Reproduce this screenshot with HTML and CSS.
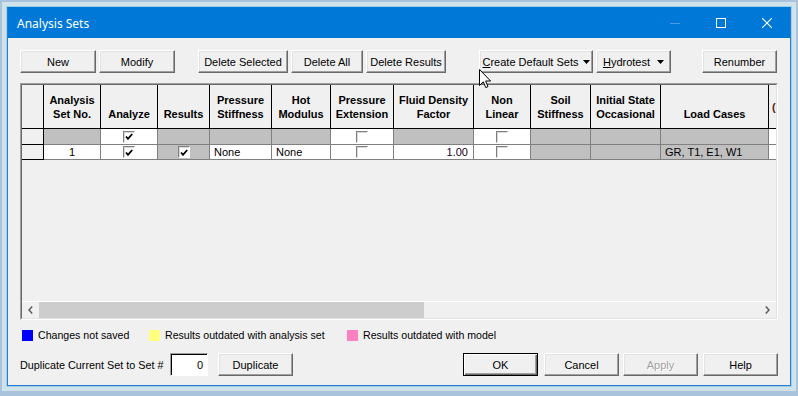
FILE: index.html
```html
<!DOCTYPE html>
<html lang="en">
<head>
  <meta charset="UTF-8" />
  <title>Analysis Sets</title>
  <link rel="stylesheet" href="styles.css">
</head>
<body>
<div class="win">
  <div class="titlebar">
    <span class="title">Analysis Sets</span>
    <span class="ctl"><svg width="10" height="10"><line x1="0" y1="5.5" x2="10" y2="5.5" stroke="#4d9ae0"/></svg></span>
    <span class="ctl"><svg width="10" height="10"><rect x="0.5" y="0.5" width="9" height="9" fill="none" stroke="#fff"/></svg></span>
    <span class="ctl"><svg width="10" height="10"><path d="M0 0L10 10M10 0L0 10" stroke="#fff" stroke-width="1.1"/></svg></span>
  </div>

  <div class="content">
    <div class="toolbar">
      <button class="btn w76">New</button>
      <button class="btn w76 ml3">Modify</button>
      <button class="btn w90 ml23">Delete Selected</button>
      <button class="btn w72 ml3">Delete All</button>
      <button class="btn w80 ml3">Delete Results</button>
      <button class="btn w114 ml33 drop"><span><u>C</u>reate Default Sets</span><svg class="tri" width="7" height="4"><path d="M0 0H7L3.5 4Z"/></svg></button>
      <button class="btn w75 ml3 drop gap7"><span><u>H</u>ydrotest</span><svg class="tri" width="7" height="4"><path d="M0 0H7L3.5 4Z"/></svg></button>
      <button class="btn w75 ml31">Renumber</button>
    </div>

    <div class="gridframe">
      <div class="gridinner">
        <div class="rows">
          <!-- header -->
          <div class="c rh hd"></div>
          <div class="c hd">Analysis<br>Set No.</div>
          <div class="c hd">Analyze</div>
          <div class="c hd">Results</div>
          <div class="c hd">Pressure<br>Stiffness</div>
          <div class="c hd">Hot<br>Modulus</div>
          <div class="c hd">Pressure<br>Extension</div>
          <div class="c hd">Fluid Density<br>Factor</div>
          <div class="c hd">Non<br>Linear</div>
          <div class="c hd">Soil<br>Stiffness</div>
          <div class="c hd">Initial State<br>Occasional</div>
          <div class="c hd">Load Cases</div>
          <div class="c hd last">(</div>

          <!-- filter row -->
          <div class="c rh"></div>
          <div class="c g"></div>
          <div class="c ctr"><span class="chk"><svg width="8" height="7"><path d="M1 3.5L3 5.8L7.2 1" fill="none" stroke="#000" stroke-width="1.8"/></svg></span></div>
          <div class="c g"></div>
          <div class="c g"></div>
          <div class="c g"></div>
          <div class="c ctr"><span class="chk"></span></div>
          <div class="c g"></div>
          <div class="c ctr"><span class="chk"></span></div>
          <div class="c g"></div>
          <div class="c g"></div>
          <div class="c g"></div>
          <div class="c"></div>

          <!-- set 1 -->
          <div class="c rh"></div>
          <div class="c ctr">1</div>
          <div class="c ctr"><span class="chk"><svg width="8" height="7"><path d="M1 3.5L3 5.8L7.2 1" fill="none" stroke="#000" stroke-width="1.8"/></svg></span></div>
          <div class="c g ctr"><span class="chk"><svg width="8" height="7"><path d="M1 3.5L3 5.8L7.2 1" fill="none" stroke="#000" stroke-width="1.8"/></svg></span></div>
          <div class="c lt">None</div>
          <div class="c lt">None</div>
          <div class="c ctr"><span class="chk"></span></div>
          <div class="c rt num">1.00</div>
          <div class="c ctr"><span class="chk"></span></div>
          <div class="c g"></div>
          <div class="c g"></div>
          <div class="c g lt">GR, T1, E1, W1</div>
          <div class="c"></div>
        </div>

        <div class="spacer"></div>

        <div class="hscroll">
          <span class="arrow"><svg width="5" height="8"><path d="M4.2 0.5L1 4L4.2 7.5" fill="none" stroke="#606060" stroke-width="1.6"/></svg></span>
          <div class="track"><div class="thumb"></div></div>
          <span class="arrow"><svg width="5" height="8"><path d="M0.8 0.5L4 4L0.8 7.5" fill="none" stroke="#606060" stroke-width="1.6"/></svg></span>
        </div>
      </div>
    </div>

    <div class="legend">
      <div class="leg leg1"><span class="sw blue"></span>Changes not saved</div>
      <div class="leg leg2"><span class="sw yellow"></span>Results outdated with analysis set</div>
      <div class="leg"><span class="sw pink"></span>Results outdated with model</div>
    </div>

    <div class="footer">
      <span class="duplabel">Duplicate Current Set to Set #</span>
      <div class="numbox">0</div>
      <button class="btn w75 ml10">Duplicate</button>
      <button class="btn w75 default push">OK</button>
      <button class="btn w75 ml6">Cancel</button>
      <button class="btn w75 ml4 disabled">Apply</button>
      <button class="btn w75 ml5">Help</button>
    </div>
  </div>
</div>

<svg class="cursor" width="13" height="20"><path d="M0.5 0.5V16.5L4.3 12.8L6.8 18.6L9 17.6L6.6 12H11.6Z" fill="#fff" stroke="#000"/></svg>
</body>
</html>
```

FILE: styles.css
```css
html, body { margin: 0; height: 100%; }
body {
  background: #a9c3dd;
  font: 11px "Liberation Sans", Arial, sans-serif;
  color: #000;
  overflow: hidden;
  padding: 7px 0 0 7px;
  box-sizing: border-box;
}

.win {
  width: 784px; height: 379px;
  box-sizing: border-box;
  border: 1px solid #2a7bd1; border-top-color: #0078d7;
  background: #f0f0f0;
  box-shadow: 0 0 0 1px #9dd0e4, 0 0 0 5px #d0e2ea;
  display: flex; flex-direction: column;
}
.titlebar { height: 30px; background: #0078d7; display: flex; }
.title {
  flex: 1; padding: 1px 0 0 9px;
  color: #fff; font: 12px "Noto Sans", sans-serif; line-height: 29px;
}
.ctl { width: 46px; display: flex; align-items: center; justify-content: center; }

.content { flex: 1; padding: 12px 12px 0 12px; display: flex; flex-direction: column; }

/* buttons */
.toolbar, .footer { display: flex; height: 23px; flex: none; }
.btn {
  height: 23px; padding: 0; margin: 0;
  box-sizing: border-box;
  font: inherit; color: #000;
  background: #f0f0f0;
  border: 1px solid; border-color: #fff #696969 #696969 #fff;
  box-shadow: inset -1px -1px #a0a0a0, inset 1px 1px #e3e3e3;
  display: flex; align-items: center; justify-content: center;
}
.btn.default {
  border-color: #000;
  box-shadow: inset 1px 1px #fff, inset -1px -1px #696969, inset -2px -2px #a0a0a0;
}
.btn.disabled { color: #a0a0a0; text-shadow: 1px 1px 0 #fff; }
.drop { gap: 4px; }
.drop.gap7 { gap: 7px; }
.tri { fill: #000; margin-top: 1px; }
.w72 { width: 72px; } .w75 { width: 75px; } .w76 { width: 76px; }
.w80 { width: 80px; } .w90 { width: 90px; } .w114 { width: 114px; }
.ml3 { margin-left: 3px; } .ml4 { margin-left: 4px; } .ml5 { margin-left: 5px; }
.ml6 { margin-left: 6px; } .ml10 { margin-left: 10px; } .ml23 { margin-left: 23px; }
.ml31 { margin-left: 31px; } .ml33 { margin-left: 33px; }
.push { margin-left: auto; margin-right: 0; }

/* grid */
.gridframe {
  margin-top: 10px; height: 237px; flex: none;
  box-sizing: border-box;
  border: 1px solid; border-color: #a0a0a0 #fff #fff #a0a0a0;
}
.gridinner {
  height: 100%; box-sizing: border-box;
  border: 1px solid; border-color: #696969 #e3e3e3 #e3e3e3 #696969;
  display: flex; flex-direction: column;
  overflow: hidden;
}
.rows {
  display: grid;
  grid-template-columns: 22px 57px 57px 52px 62px 59px 63px 80px 57px 60px 70px 108px 100px;
  grid-template-rows: 44px 16px 15px;
  overflow: hidden;
}
.c {
  box-sizing: border-box;
  border-right: 1px solid #808080; border-bottom: 1px solid #808080;
  background: #fff;
  display: flex; align-items: center;
  white-space: nowrap; overflow: hidden;
}
.g { background: #c0c0c0; }
.rh { background: #f0f0f0; border-color: #000; }
.hd {
  background: #f0f0f0; border-color: #000;
  font-weight: bold; line-height: 14px; text-align: center;
  justify-content: center; align-items: flex-end;
  padding-bottom: 7px;
}
.hd.last { justify-content: flex-start; align-items: center; padding: 0 0 0 3px; color: #602010; }
.ctr { justify-content: center; }
.lt { padding-left: 4px; }
.rt { justify-content: flex-end; padding-right: 5px; }
.num { color: #200020; }

.chk {
  width: 12px; height: 12px; box-sizing: border-box;
  border: 1px solid; border-color: #808080 #fff #fff #808080;
  box-shadow: inset 1px 1px #d8d8d8;
  background: #fff;
  display: flex; align-items: center; justify-content: center;
}
.chk svg { display: block; }

.spacer { flex: 1; background: #f0f0f0; }
.hscroll {
  height: 17px; flex: none; box-sizing: border-box;
  border-top: 1px solid #fff;
  display: flex; background: #f0f0f0;
}
.arrow { width: 17px; display: flex; align-items: center; justify-content: center; }
.track { flex: 1; }
.thumb { width: 385px; height: 100%; background: #cdcdcd; }

/* legend */
.legend { display: flex; align-items: center; height: 12px; margin-top: 9px; padding-left: 2px; flex: none; font-size: 10.6px; }
.leg { display: flex; align-items: center; gap: 5px; }
.leg1 { width: 127px; }
.leg2 { width: 198px; }
.sw { width: 11px; height: 11px; }
.blue { background: #0000ff; }
.yellow { background: #ffff80; }
.pink { background: #ff80c0; }

/* footer */
.footer { margin-top: 12px; align-items: center; }
.duplabel { width: 150px; font-size: 10.8px; }
.numbox {
  width: 38px; height: 23px; box-sizing: border-box;
  border: 1px solid; border-color: #a0a0a0 #fff #fff #a0a0a0;
  box-shadow: inset 1px 1px #000;
  background: #fff;
  display: flex; align-items: center; justify-content: flex-end;
  padding-right: 4px;
}

.cursor { position: absolute; left: 479px; top: 69px; }
```
